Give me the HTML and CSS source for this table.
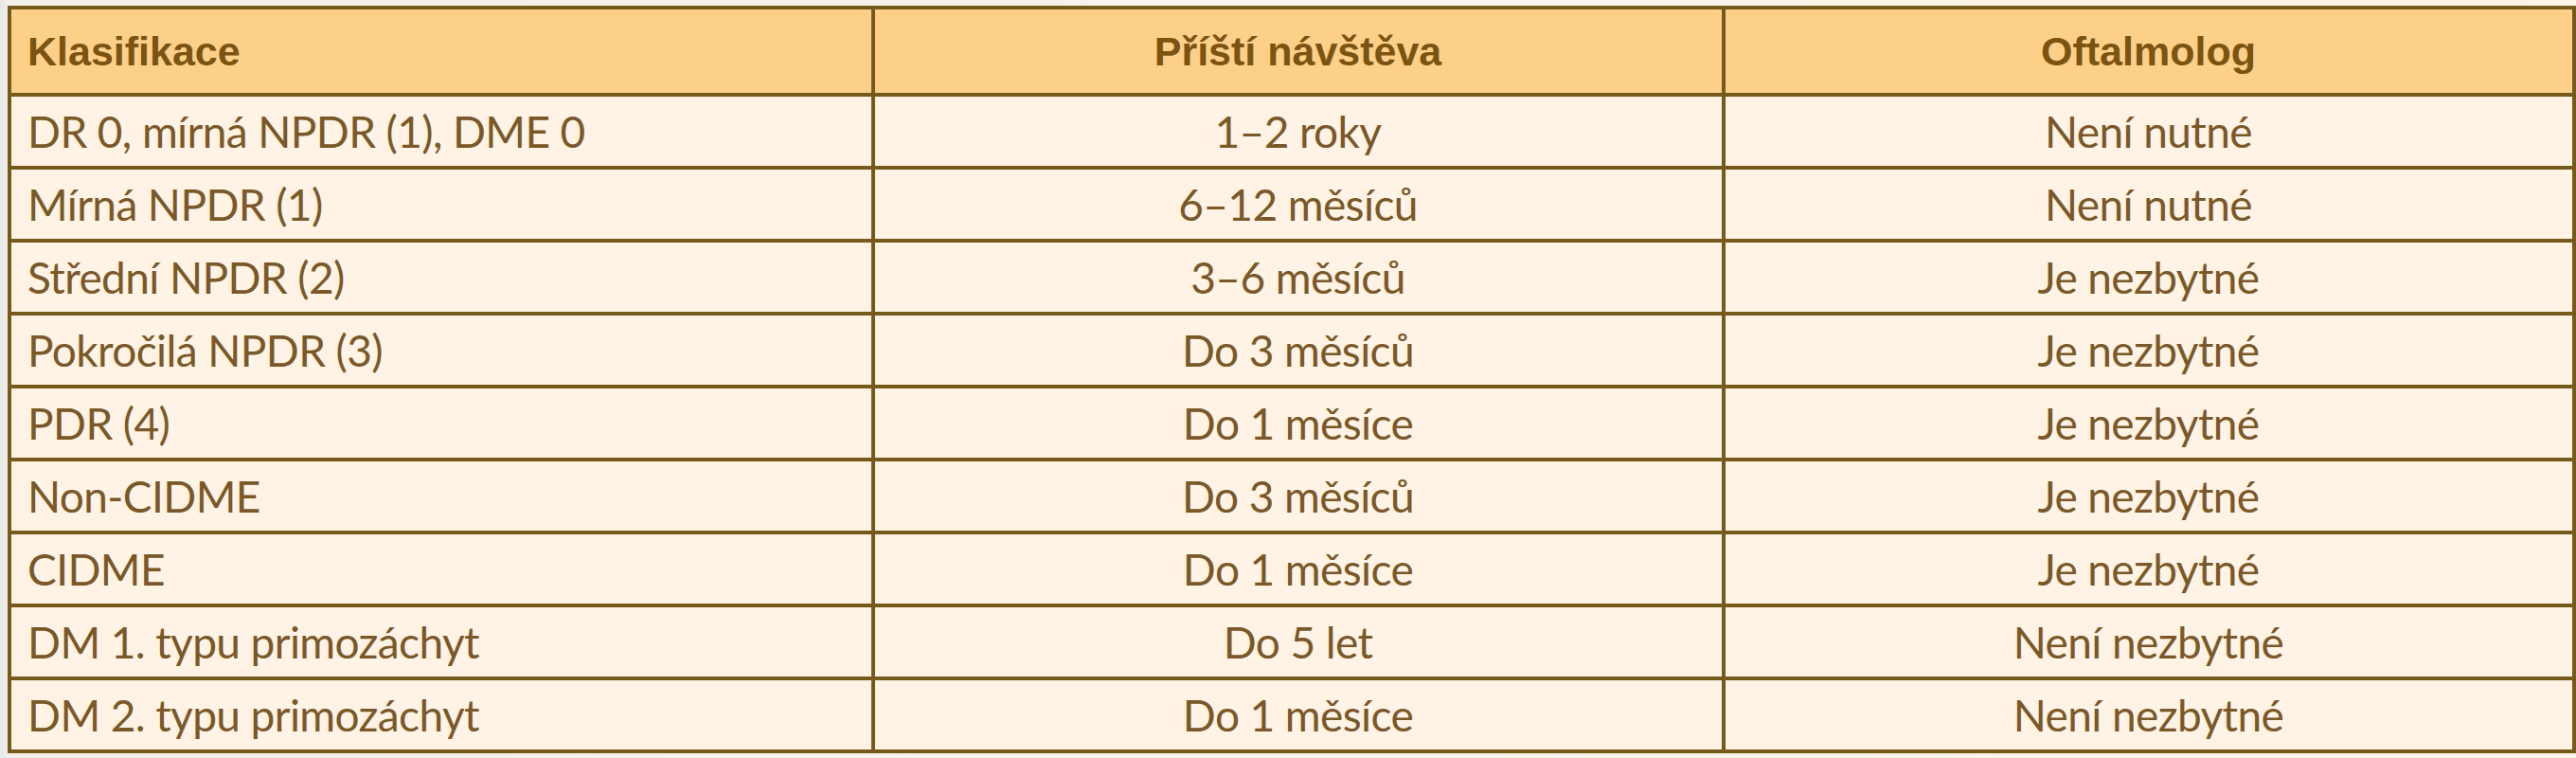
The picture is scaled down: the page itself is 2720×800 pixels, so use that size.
FILE: index.html
```html
<!DOCTYPE html>
<html lang="cs">
<head>
<meta charset="utf-8">
<title>Klasifikace</title>
<link rel="stylesheet" href="styles.css">
</head>
<body>
<div class="page">
<table class="grid">
  <colgroup>
    <col class="c1"><col class="c2"><col class="c3">
  </colgroup>
  <thead>
    <tr>
      <th class="left">Klasifikace</th>
      <th>Příští návštěva</th>
      <th>Oftalmolog</th>
    </tr>
  </thead>
  <tbody>
    <tr><td class="left">DR 0, mírná NPDR (1), DME 0</td><td>1–2 roky</td><td>Není nutné</td></tr>
    <tr><td class="left">Mírná NPDR (1)</td><td>6–12 měsíců</td><td>Není nutné</td></tr>
    <tr><td class="left">Střední NPDR (2)</td><td>3–6 měsíců</td><td>Je nezbytné</td></tr>
    <tr><td class="left">Pokročilá NPDR (3)</td><td>Do 3 měsíců</td><td>Je nezbytné</td></tr>
    <tr><td class="left">PDR (4)</td><td>Do 1 měsíce</td><td>Je nezbytné</td></tr>
    <tr><td class="left">Non-CIDME</td><td>Do 3 měsíců</td><td>Je nezbytné</td></tr>
    <tr><td class="left">CIDME</td><td>Do 1 měsíce</td><td>Je nezbytné</td></tr>
    <tr><td class="left">DM 1. typu primozáchyt</td><td>Do 5 let</td><td>Není nezbytné</td></tr>
    <tr><td class="left">DM 2. typu primozáchyt</td><td>Do 1 měsíce</td><td>Není nezbytné</td></tr>
  </tbody>
</table>
</div>
</body>
</html>
```
FILE: styles.css
```css
html, body {
  margin: 0;
  padding: 0;
}
body {
  background: linear-gradient(90deg, #e6e8e8 0px, #f4f1ea 10px, #fbf5ea 100%);
  width: 2720px;
  height: 800px;
  overflow: hidden;
}
.page {
  padding: 6px 0 0 8px;
}
.grid {
  border-collapse: collapse;
  table-layout: fixed;
  width: 2708px;
  border: 3px solid #765a1c;
  font-family: Lato, "Liberation Sans", Arial, sans-serif;
  line-height: 1;
}
.c1 { width: 912px; }
.c2 { width: 898px; }
.c3 { width: 898px; }
.grid th, .grid td {
  border: 4px solid #765a1c;
  text-align: center;
  vertical-align: middle;
  padding: 0 18px 0 17px;
  white-space: nowrap;
}
.grid th {
  height: 88px;
  background: #fdd089;
  color: #7b5412;
  font-family: "Liberation Sans", Arial, sans-serif;
  font-weight: bold;
  font-size: 43px;
}
.grid td {
  height: 73px;
  background: #fef3e4;
  color: #7a5828;
  font-size: 46px;
  letter-spacing: -0.6px;
}
.grid .left {
  text-align: left;
}
```
